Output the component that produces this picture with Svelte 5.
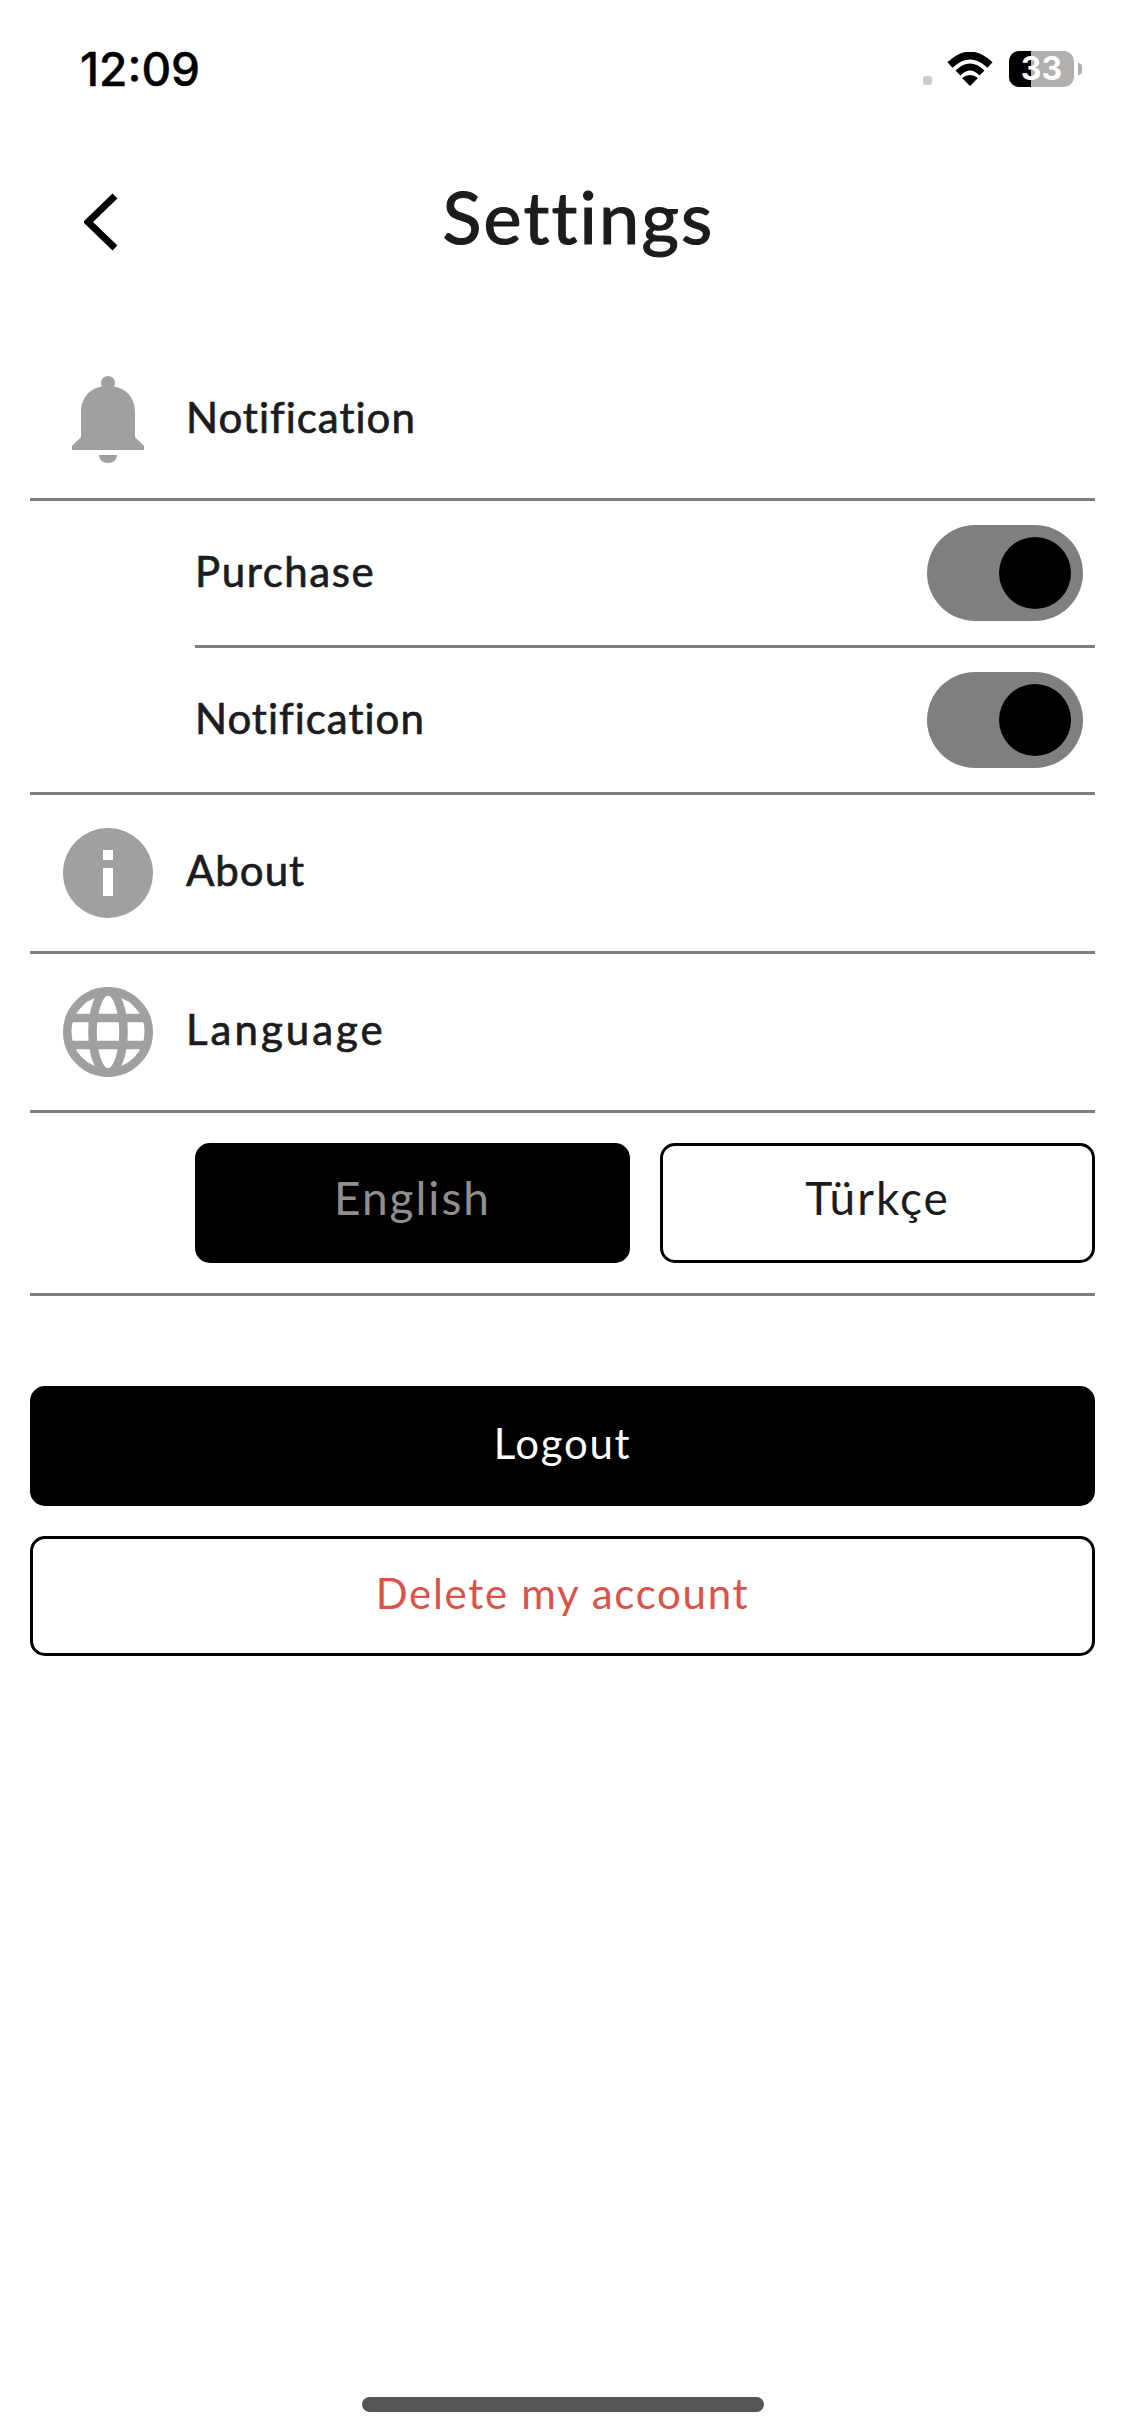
<script>
  let purchaseOn = $state(true);
  let notifyOn = $state(true);
  let language = $state('en');
</script>

<div class="page">
  <div class="status">
    <span class="time">12:09</span>
    <div class="status-right">
      <span class="dot"></span>
      <svg class="wifi" viewBox="0 0 46 34" width="46" height="34">
        <path d="M3 13 Q23 -6 43 13" fill="none" stroke="#000" stroke-width="7.5" />
        <path d="M11 21 Q23 9 35 21" fill="none" stroke="#000" stroke-width="7" />
        <path d="M23 34 L15 26 Q23 20 31 26 Z" fill="#000" />
      </svg>
      <div class="battery">
        <div class="battery-body">
          <span class="battery-level"></span>
          <span class="battery-text">33</span>
        </div>
        <span class="battery-tip"></span>
      </div>
    </div>
  </div>

  <header class="header">
    <button class="back" aria-label="Back">
      <svg viewBox="0 0 35 58" width="35" height="58">
        <path d="M31 3 L4 29 L31 55" fill="none" stroke="#000" stroke-width="7" />
      </svg>
    </button>
    <h1>Settings</h1>
  </header>

  <section class="list">
    <div class="row first">
      <svg class="icon bell" viewBox="0 0 72 87" width="72" height="87">
        <circle cx="36" cy="7" r="7" fill="#a0a0a0" />
        <path d="M9 61 V36 C9 20 20 10 36 10 C52 10 63 20 63 36 V61 L72 70 V74 H0 V70 Z" fill="#a0a0a0" />
        <path d="M27 79 H45 C45 84 41 87 36 87 C31 87 27 84 27 79 Z" fill="#a0a0a0" />
      </svg>
      <span class="label">Notification</span>
    </div>

    <div class="sub-row">
      <div class="sub-inner">
        <span class="label purchase">Purchase</span>
        <button class="toggle" class:off={!purchaseOn} aria-label="Purchase" onclick={() => (purchaseOn = !purchaseOn)}><span></span></button>
      </div>
    </div>
    <div class="sub-row last">
      <div class="sub-inner">
        <span class="label">Notification</span>
        <button class="toggle" class:off={!notifyOn} aria-label="Notification" onclick={() => (notifyOn = !notifyOn)}><span></span></button>
      </div>
    </div>

    <div class="row">
      <svg class="icon" viewBox="0 0 90 90" width="90" height="90">
        <circle cx="45" cy="45" r="45" fill="#a0a0a0" />
        <rect x="40" y="22" width="10" height="10" fill="#fff" />
        <rect x="40" y="40" width="10" height="28" fill="#fff" />
      </svg>
      <span class="label">About</span>
    </div>

    <div class="row">
      <svg class="icon" viewBox="0 0 90 90" width="90" height="90">
        <g fill="none" stroke="#a0a0a0" stroke-width="8.5">
          <circle cx="45" cy="45" r="40.75" />
          <ellipse cx="45" cy="45" rx="15.5" ry="40.75" />
          <path d="M6 31 H84 M6 58 H84" />
        </g>
      </svg>
      <span class="label language">Language</span>
    </div>

    <div class="lang-row">
      <button class="btn" class:solid={language === 'en'} class:muted={language === 'en'} onclick={() => (language = 'en')}>English</button>
      <button class="btn" class:solid={language === 'tr'} class:muted={language === 'tr'} onclick={() => (language = 'tr')}>Türkçe</button>
    </div>
  </section>

  <div class="actions">
    <button class="btn solid small">Logout</button>
    <button class="btn danger small">Delete my account</button>
  </div>

  <div class="home-bar"></div>
</div>

<style>
  :global(body) {
    margin: 0;
    background: #fff;
  }

  .page {
    display: flex;
    flex-direction: column;
    width: 1125px;
    height: 2436px;
    box-sizing: border-box;
    font-family: Lato, "Open Sans", sans-serif;
    color: #1c1c1e;
    overflow: hidden;
  }

  .status {
    display: flex;
    justify-content: space-between;
    align-items: center;
    height: 141px;
    padding: 0 43px 3px 80px;
    box-sizing: border-box;
  }

  .time {
    font-family: Inter, sans-serif;
    font-size: 46px;
    font-weight: 500;
    color: #000;
    line-height: 1;
    margin-top: -1px;
    -webkit-text-stroke: 0.4px #000;
  }

  .status-right {
    display: flex;
    align-items: center;
    gap: 15px;
  }

  .dot {
    width: 9px;
    height: 9px;
    border-radius: 3px;
    background: #ccc;
    align-self: flex-end;
    margin-bottom: 2px;
  }

  .wifi {
    display: block;
    margin-right: 1px;
  }

  .battery {
    display: flex;
    align-items: center;
    gap: 4px;
  }

  .battery-body {
    position: relative;
    display: flex;
    align-items: center;
    justify-content: center;
    width: 65px;
    height: 36px;
    border-radius: 10px;
    background: #b0b0b0;
  }

  .battery-level {
    position: absolute;
    left: 0;
    top: 0;
    bottom: 0;
    width: 22px;
    border-radius: 10px 0 0 10px;
    background: #000;
  }

  .battery-text {
    position: relative;
    font-family: Inter, sans-serif;
    font-size: 32px;
    font-weight: 700;
    color: #fff;
    line-height: 1;
  }

  .battery-tip {
    width: 4px;
    height: 12px;
    border-radius: 0 6px 6px 0;
    background: #b0b0b0;
  }

  .header {
    display: flex;
    align-items: center;
    height: 162px;
    padding: 0 84px;
  }

  .back {
    display: flex;
    width: 35px;
    padding: 0;
    border: 0;
    background: none;
  }

  h1 {
    flex: 1;
    margin: 0;
    padding: 0 3px 12px 0;
    text-align: center;
    font-size: 72px;
    font-weight: 400;
    line-height: 1;
    letter-spacing: 2.2px;
    -webkit-text-stroke: 1.2px #1c1c1e;
  }

  .list {
    display: flex;
    flex-direction: column;
    margin: 49px 30px 0;
  }

  .row {
    display: flex;
    align-items: center;
    gap: 33px;
    height: 156px;
    padding-left: 33px;
    border-bottom: 3px solid #7f7f7f;
  }

  .row.first {
    height: 146px;
    padding-left: 42px;
    gap: 42px;
  }

  .row .label {
    margin-bottom: 6px;
  }

  .row.first .label {
    margin-bottom: 16px;
  }

  .bell {
    margin-bottom: 11px;
  }

  .icon {
    flex: none;
    display: block;
  }

  .label {
    font-size: 42px;
    font-weight: 400;
    letter-spacing: 1px;
    -webkit-text-stroke: 0.7px #1c1c1e;
  }

  .label.purchase {
    letter-spacing: 1.6px;
  }

  .label.language {
    letter-spacing: 3px;
  }

  .sub-row {
    padding-left: 165px;
  }

  .sub-row .label {
    margin-bottom: 5px;
  }

  .sub-row.last {
    border-bottom: 3px solid #7f7f7f;
  }

  .sub-row:not(.last) .sub-inner {
    border-bottom: 3px solid #7f7f7f;
  }

  .sub-inner {
    display: flex;
    align-items: center;
    justify-content: space-between;
    height: 144px;
    padding-right: 12px;
  }

  .toggle {
    display: flex;
    justify-content: flex-end;
    align-items: center;
    width: 156px;
    height: 96px;
    padding: 0 12px;
    border: 0;
    border-radius: 48px;
    background: #7f7f7f;
    box-sizing: border-box;
  }

  .toggle.off {
    justify-content: flex-start;
  }

  .toggle span {
    width: 72px;
    height: 72px;
    border-radius: 50%;
    background: #000;
  }

  .lang-row {
    display: grid;
    grid-template-columns: 1fr 1fr;
    gap: 30px;
    padding: 30px 0 30px 165px;
    border-bottom: 3px solid #7f7f7f;
  }

  .btn {
    display: flex;
    align-items: center;
    justify-content: center;
    height: 120px;
    border: 3px solid #000;
    border-radius: 15px;
    background: #fff;
    box-sizing: border-box;
    font-family: inherit;
    font-size: 46px;
    letter-spacing: 2px;
    color: #1c1c1e;
    padding: 0 0 12px;
  }

  .btn.solid {
    background: #000;
    color: #fff;
  }

  .btn.muted {
    color: #8f8f8f;
  }

  .btn.small {
    font-size: 42px;
    letter-spacing: 1.7px;
    padding-bottom: 6px;
  }

  .btn.danger {
    color: #d9534a;
  }

  .actions {
    display: flex;
    flex-direction: column;
    gap: 30px;
    margin: 90px 30px 0;
  }

  .home-bar {
    width: 402px;
    height: 15px;
    margin: auto auto 24px;
    border-radius: 8px;
    background: #555;
  }
</style>
